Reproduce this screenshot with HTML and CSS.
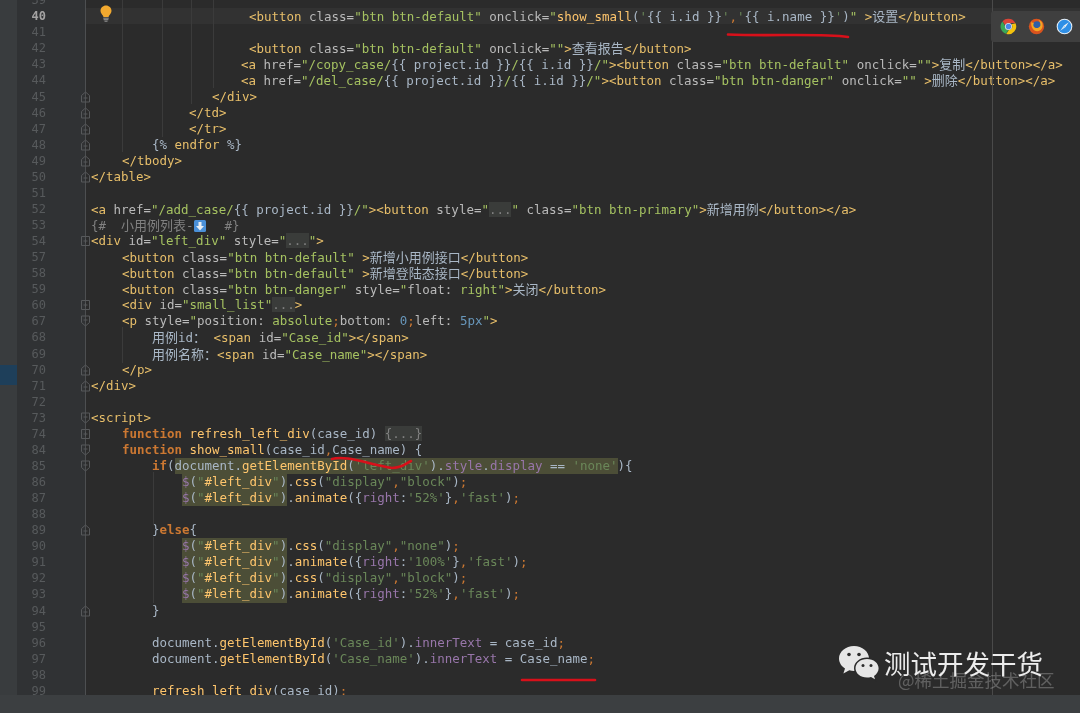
FILE: index.html
```html
<!DOCTYPE html>
<html lang="zh">
<head>
<meta charset="utf-8">
<title>Code editor</title>
<link rel="stylesheet" href="styles.css">
</head>
<body>
<svg class="defs" aria-hidden="true">
  <symbol id="fe" viewBox="0 0 9 12"><path d="M.5 11V4.5L4.5 1 8.5 4.5V11Z" fill="none" stroke="#57595b"/><path d="M2.5 7H6.5" stroke="#57595b"/></symbol>
  <symbol id="fs" viewBox="0 0 9 12"><path d="M.5 1V7.5L4.5 11 8.5 7.5V1Z" fill="none" stroke="#57595b"/><path d="M2.5 5H6.5" stroke="#57595b"/></symbol>
  <symbol id="fp" viewBox="0 0 9 12"><path d="M.5 1.5H8.5V10.5H.5Z" fill="none" stroke="#57595b"/><path d="M2.5 6H6.5M4.5 4V8" stroke="#57595b"/></symbol>
</svg>
<div class="window">
  <div class="editor">
    <div class="strip"><div class="strip-sel"></div></div>
    <div class="pane">
      <div class="lines">
        <div class="row"><div class="gut"><span class="num">39</span></div><div class="code"></div></div>
        <div class="row cur"><div class="gut"><span class="num">40</span></div><div class="code in7"><span class="t">&lt;button</span> <span class="n">class=</span><span class="s">"btn btn-default"</span> <span class="n">onclick=</span><span class="s">"</span><span class="f">show_small</span>(<span class="j">'</span>{{ i.id }}<span class="j">'</span><span class="k">,</span><span class="j">'</span>{{ i.name }}<span class="j">'</span>)<span class="s">"</span> <span class="t">&gt;</span><span class="cn">设置</span><span class="t">&lt;/button&gt;</span></div></div>
        <div class="row"><div class="gut"><span class="num">41</span></div><div class="code"></div></div>
        <div class="row"><div class="gut"><span class="num">42</span></div><div class="code in7"><span class="t">&lt;button</span> <span class="n">class=</span><span class="s">"btn btn-default"</span> <span class="n">onclick=</span><span class="s">""</span><span class="t">&gt;</span><span class="cn">查看报告</span><span class="t">&lt;/button&gt;</span></div></div>
        <div class="row"><div class="gut"><span class="num">43</span></div><div class="code in6"><span class="t">&lt;a</span> <span class="n">href=</span><span class="s">"/copy_case/</span>{{ project.id }}<span class="s">/</span>{{ i.id }}<span class="s">/"</span><span class="t">&gt;&lt;button</span> <span class="n">class=</span><span class="s">"btn btn-default"</span> <span class="n">onclick=</span><span class="s">""</span><span class="t">&gt;</span><span class="cn">复制</span><span class="t">&lt;/button&gt;&lt;/a&gt;</span></div></div>
        <div class="row"><div class="gut"><span class="num">44</span></div><div class="code in6"><span class="t">&lt;a</span> <span class="n">href=</span><span class="s">"/del_case/</span>{{ project.id }}<span class="s">/</span>{{ i.id }}<span class="s">/"</span><span class="t">&gt;&lt;button</span> <span class="n">class=</span><span class="s">"btn btn-danger"</span> <span class="n">onclick=</span><span class="s">""</span> <span class="t">&gt;</span><span class="cn">删除</span><span class="t">&lt;/button&gt;&lt;/a&gt;</span></div></div>
        <div class="row"><div class="gut"><span class="num">45</span><svg class="fold"><use href="#fe"/></svg></div><div class="code in5"><span class="t">&lt;/div&gt;</span></div></div>
        <div class="row"><div class="gut"><span class="num">46</span><svg class="fold"><use href="#fe"/></svg></div><div class="code in4"><span class="t">&lt;/td&gt;</span></div></div>
        <div class="row"><div class="gut"><span class="num">47</span><svg class="fold"><use href="#fe"/></svg></div><div class="code in4"><span class="t">&lt;/tr&gt;</span></div></div>
        <div class="row"><div class="gut"><span class="num">48</span><svg class="fold"><use href="#fe"/></svg></div><div class="code in2">{% <span class="t">endfor</span> %}</div></div>
        <div class="row"><div class="gut"><span class="num">49</span><svg class="fold"><use href="#fe"/></svg></div><div class="code in1"><span class="t">&lt;/tbody&gt;</span></div></div>
        <div class="row"><div class="gut"><span class="num">50</span><svg class="fold"><use href="#fe"/></svg></div><div class="code"><span class="t">&lt;/table&gt;</span></div></div>
        <div class="row"><div class="gut"><span class="num">51</span></div><div class="code"></div></div>
        <div class="row"><div class="gut"><span class="num">52</span></div><div class="code"><span class="t">&lt;a</span> <span class="n">href=</span><span class="s">"/add_case/</span>{{ project.id }}<span class="s">/"</span><span class="t">&gt;&lt;button</span> <span class="n">style=</span><span class="s">"</span><span class="fd">...</span><span class="s">"</span> <span class="n">class=</span><span class="s">"btn btn-primary"</span><span class="t">&gt;</span><span class="cn">新增用例</span><span class="t">&lt;/button&gt;&lt;/a&gt;</span></div></div>
        <div class="row"><div class="gut"><span class="num">53</span></div><div class="code c">{#  <span class="cn">小用例列表</span>-<svg class="arrow" viewBox="0 0 12 12"><rect width="12" height="12" rx="1.5" fill="#4a90d9"/><path d="M4.5 2H7.5V6H10L6 10.5 2 6H4.5Z" fill="#e8eef4"/></svg>  #}</div></div>
        <div class="row"><div class="gut"><span class="num">54</span><svg class="fold"><use href="#fp"/></svg></div><div class="code"><span class="t">&lt;div</span> <span class="n">id=</span><span class="s">"left_div"</span> <span class="n">style=</span><span class="s">"</span><span class="fd">...</span><span class="s">"</span><span class="t">&gt;</span></div></div>
        <div class="row"><div class="gut"><span class="num">57</span></div><div class="code in1"><span class="t">&lt;button</span> <span class="n">class=</span><span class="s">"btn btn-default"</span> <span class="t">&gt;</span><span class="cn">新增小用例接口</span><span class="t">&lt;/button&gt;</span></div></div>
        <div class="row"><div class="gut"><span class="num">58</span></div><div class="code in1"><span class="t">&lt;button</span> <span class="n">class=</span><span class="s">"btn btn-default"</span> <span class="t">&gt;</span><span class="cn">新增登陆态接口</span><span class="t">&lt;/button&gt;</span></div></div>
        <div class="row"><div class="gut"><span class="num">59</span></div><div class="code in1"><span class="t">&lt;button</span> <span class="n">class=</span><span class="s">"btn btn-danger"</span> <span class="n">style=</span><span class="s">"</span><span class="n">float: </span><span class="s">right"</span><span class="t">&gt;</span><span class="cn">关闭</span><span class="t">&lt;/button&gt;</span></div></div>
        <div class="row"><div class="gut"><span class="num">60</span><svg class="fold"><use href="#fp"/></svg></div><div class="code in1"><span class="t">&lt;div</span> <span class="n">id=</span><span class="s">"small_list"</span><span class="fd">...</span><span class="t">&gt;</span></div></div>
        <div class="row"><div class="gut"><span class="num">67</span><svg class="fold"><use href="#fs"/></svg></div><div class="code in1"><span class="t">&lt;p</span> <span class="n">style=</span><span class="s">"</span><span class="n">position: </span><span class="s">absolute</span><span class="k">;</span><span class="n">bottom: </span><span class="b">0</span><span class="k">;</span><span class="n">left: </span><span class="b">5px</span><span class="s">"</span><span class="t">&gt;</span></div></div>
        <div class="row"><div class="gut"><span class="num">68</span></div><div class="code in2"><span class="cn">用例</span>id<span class="cn">：</span> <span class="t">&lt;span</span> <span class="n">id=</span><span class="s">"Case_id"</span><span class="t">&gt;&lt;/span&gt;</span></div></div>
        <div class="row"><div class="gut"><span class="num">69</span></div><div class="code in2"><span class="cn">用例名称：</span><span class="t">&lt;span</span> <span class="n">id=</span><span class="s">"Case_name"</span><span class="t">&gt;&lt;/span&gt;</span></div></div>
        <div class="row"><div class="gut"><span class="num">70</span><svg class="fold"><use href="#fe"/></svg></div><div class="code in1"><span class="t">&lt;/p&gt;</span></div></div>
        <div class="row"><div class="gut"><span class="num">71</span><svg class="fold"><use href="#fe"/></svg></div><div class="code"><span class="t">&lt;/div&gt;</span></div></div>
        <div class="row"><div class="gut"><span class="num">72</span></div><div class="code"></div></div>
        <div class="row"><div class="gut"><span class="num">73</span><svg class="fold"><use href="#fs"/></svg></div><div class="code"><span class="t">&lt;script&gt;</span></div></div>
        <div class="row"><div class="gut"><span class="num">74</span><svg class="fold"><use href="#fp"/></svg></div><div class="code in1"><span class="kw">function</span> <span class="f">refresh_left_div</span>(case_id) <span class="fd">{...}</span></div></div>
        <div class="row"><div class="gut"><span class="num">84</span><svg class="fold"><use href="#fs"/></svg></div><div class="code in1"><span class="kw">function</span> <span class="f">show_small</span>(case_id<span class="k">,</span>Case_name) {</div></div>
        <div class="row"><div class="gut"><span class="num">85</span><svg class="fold"><use href="#fs"/></svg></div><div class="code in2"><span class="kw">if</span>(<span class="h">document.<span class="f">getElementById</span>(<span class="j">'left_div'</span>).<span class="m">style</span>.<span class="m">display</span> == <span class="j">'none'</span></span>){</div></div>
        <div class="row"><div class="gut"><span class="num">86</span></div><div class="code in3"><span class="h"><span class="m">$</span>(<span class="j">"</span><span class="f">#left_div</span><span class="j">"</span>)</span>.<span class="f">css</span>(<span class="j">"display"</span><span class="k">,</span><span class="j">"block"</span>)<span class="k">;</span></div></div>
        <div class="row"><div class="gut"><span class="num">87</span></div><div class="code in3"><span class="h"><span class="m">$</span>(<span class="j">"</span><span class="f">#left_div</span><span class="j">"</span>)</span>.<span class="f">animate</span>({<span class="m">right</span>:<span class="j">'52%'</span>}<span class="k">,</span><span class="j">'fast'</span>)<span class="k">;</span></div></div>
        <div class="row"><div class="gut"><span class="num">88</span></div><div class="code"></div></div>
        <div class="row"><div class="gut"><span class="num">89</span><svg class="fold"><use href="#fe"/></svg></div><div class="code in2">}<span class="kw">else</span>{</div></div>
        <div class="row"><div class="gut"><span class="num">90</span></div><div class="code in3"><span class="h"><span class="m">$</span>(<span class="j">"</span><span class="f">#left_div</span><span class="j">"</span>)</span>.<span class="f">css</span>(<span class="j">"display"</span><span class="k">,</span><span class="j">"none"</span>)<span class="k">;</span></div></div>
        <div class="row"><div class="gut"><span class="num">91</span></div><div class="code in3"><span class="h"><span class="m">$</span>(<span class="j">"</span><span class="f">#left_div</span><span class="j">"</span>)</span>.<span class="f">animate</span>({<span class="m">right</span>:<span class="j">'100%'</span>}<span class="k">,</span><span class="j">'fast'</span>)<span class="k">;</span></div></div>
        <div class="row"><div class="gut"><span class="num">92</span></div><div class="code in3"><span class="h"><span class="m">$</span>(<span class="j">"</span><span class="f">#left_div</span><span class="j">"</span>)</span>.<span class="f">css</span>(<span class="j">"display"</span><span class="k">,</span><span class="j">"block"</span>)<span class="k">;</span></div></div>
        <div class="row"><div class="gut"><span class="num">93</span></div><div class="code in3"><span class="h"><span class="m">$</span>(<span class="j">"</span><span class="f">#left_div</span><span class="j">"</span>)</span>.<span class="f">animate</span>({<span class="m">right</span>:<span class="j">'52%'</span>}<span class="k">,</span><span class="j">'fast'</span>)<span class="k">;</span></div></div>
        <div class="row"><div class="gut"><span class="num">94</span><svg class="fold"><use href="#fe"/></svg></div><div class="code in2">}</div></div>
        <div class="row"><div class="gut"><span class="num">95</span></div><div class="code"></div></div>
        <div class="row"><div class="gut"><span class="num">96</span></div><div class="code in2">document.<span class="f">getElementById</span>(<span class="j">'Case_id'</span>).<span class="m">innerText</span> = case_id<span class="k">;</span></div></div>
        <div class="row"><div class="gut"><span class="num">97</span></div><div class="code in2">document.<span class="f">getElementById</span>(<span class="j">'Case_name'</span>).<span class="m">innerText</span> = Case_name<span class="k">;</span></div></div>
        <div class="row"><div class="gut"><span class="num">98</span></div><div class="code"></div></div>
        <div class="row"><div class="gut"><span class="num">99</span></div><div class="code in2"><span class="f">refresh_left_div</span>(case_id)<span class="k">;</span></div></div>
      </div>
    </div>
  </div>
  <div class="status"></div>

  <div class="guide g1"></div>
  <div class="guide g2"></div>
  <div class="guide g3"></div>
  <div class="guide g4"></div>
  <div class="guide g5"></div>
  <div class="guide g6"></div>
  <div class="guide g7"></div>
  <div class="margin-line"></div>

  <svg class="bulb" viewBox="0 0 12 17"><path d="M6 0.5C9 .5 11.5 2.8 11.5 5.7 11.5 8 10 9.2 9 10.8 8.7 11.3 8.6 11.7 8.6 12H3.4C3.4 11.7 3.3 11.3 3 10.8 2 9.2 .5 8 .5 5.7 .5 2.8 3 .5 6 .5Z" fill="#f2a92f"/><path d="M3.3 13.2H8.7M3.6 14.7H8.4M4.5 16.2H7.5" stroke="#9a9a9a" stroke-width="1"/></svg>

  <div class="dock">
    <svg class="dock-icon" viewBox="0 0 20 20"><path d="M10 1A9 9 0 0 1 18 6H10A4.2 4.2 0 0 0 6 8.5L3 3.8A9 9 0 0 1 10 1Z" fill="#db4437"/><path d="M2.9 4A9 9 0 0 0 7 18.6L10 14.2A4.2 4.2 0 0 1 6 9.5Z" fill="#3aa757"/><path d="M18.2 6.3A9 9 0 0 1 7.4 18.7L10.4 14.2A4.2 4.2 0 0 0 13.5 7.3Z" fill="#f4c20d"/><circle cx="10" cy="10" r="4.2" fill="#e4e4e4"/><circle cx="10" cy="10" r="3.2" fill="#4a86e8"/></svg>
    <svg class="dock-icon" viewBox="0 0 20 20"><circle cx="10" cy="10" r="9" fill="#d9531e"/><circle cx="10.5" cy="9" r="5.2" fill="#2f5fa8"/><path d="M4 4C3 9 5 15 11 15.5 15 15.5 18 12 17 6.5 16 4 14 2.5 12 2.2 14 4 15 6.5 14.5 9 13 12.5 8 13 6.5 9.5 6 8 6.5 6.5 7 5.5 5.5 6 4.8 5.5 4 4Z" fill="#f5a623"/></svg>
    <svg class="dock-icon" viewBox="0 0 20 20"><circle cx="10" cy="10" r="9.2" fill="#e6eef5"/><circle cx="10" cy="10" r="8" fill="#2f8fe6"/><path d="M15 5L11 11 9 9Z" fill="#f2f2f2"/><path d="M5 15L9 9 11 11Z" fill="#cfe4f6"/></svg>
  </div>

  <svg class="marks" viewBox="0 0 1080 713">
    <path d="M728 34.5C770 36.5 820 33 848 37" />
    <path d="M332 459C345 455 365 463 392 468 402 468 405 464 411 461" />
    <path d="M522 680H595" />
  </svg>

  <div class="stamp">
    <svg class="wechat" viewBox="0 0 44 38"><path d="M17 1C8.7 1 2 6.6 2 13.5 2 17.6 4.4 21.2 8 23.4L6.4 28.5 12.3 25.2C13.8 25.7 15.4 26 17 26 25.3 26 32 20.4 32 13.5 32 6.6 25.3 1 17 1Z" fill="#e6e6e6"/><path d="M30 12.5C22.8 12.5 17 17.3 17 23.3 17 29.3 22.8 34 30 34 31.4 34 32.7 33.8 34 33.4L39.2 36.4 37.8 31.8C41 29.8 43 26.8 43 23.3 43 17.3 37.2 12.5 30 12.5Z" fill="#2b2b2b"/><path d="M30 14C23.4 14 18.5 18.2 18.5 23.3 18.5 28.4 23.4 32.5 30 32.5 31.4 32.5 32.7 32.3 34 31.9L38 34.2 37 30.9C39.8 29.2 41.6 26.5 41.6 23.3 41.6 18.2 36.6 14 30 14Z" fill="#e6e6e6"/><circle cx="12" cy="9.5" r="1.8" fill="#2b2b2b"/><circle cx="22" cy="9.5" r="1.8" fill="#2b2b2b"/><circle cx="26" cy="20.5" r="1.5" fill="#2b2b2b"/><circle cx="34" cy="20.5" r="1.5" fill="#2b2b2b"/></svg>
    <div class="stamp-text">
      <span class="stamp-title">测试开发干货</span>
      <span class="stamp-sub">@稀土掘金技术社区</span>
    </div>
  </div>
</div>
</body>
</html>
```
FILE: styles.css
```css
* { box-sizing: border-box; }
html, body { margin: 0; padding: 0; background: #2b2b2b; }
.defs { display: none; }

.window {
  position: relative;
  width: 1080px;
  height: 713px;
  display: flex;
  flex-direction: column;
  overflow: hidden;
  background: #2b2b2b;
  filter: blur(0.5px);
}

.editor { flex: 1; min-height: 0; display: flex; overflow: hidden; }

.strip {
  width: 17px;
  flex: none;
  background: #393c3e;
  padding-top: 365px;
}
.strip-sel { height: 20px; background: #1e3f5a; }

.pane { flex: 1; min-width: 0; }
.lines { margin-top: -7.85px; }

.row {
  display: flex;
  height: 16.07px;
  font: 12.48px/16.07px "DejaVu Sans Mono", "Noto Sans CJK SC", monospace;
  color: #a9b7c6;
  white-space: pre;
}
.row.cur { background: #323232; }

.gut {
  width: 74px;
  flex: none;
  display: flex;
  align-items: center;
  background: linear-gradient(to right, #303234 68px, #4d4f51 68px, #4d4f51 69px, transparent 69px);
}
.cur .gut { background: linear-gradient(to right, #303234 68px, #4d4f51 68px, #4d4f51 69px, #323232 69px); }

.num {
  width: 29px;
  text-align: right;
  font-size: 12px;
  color: #575a5c;
}
.cur .num { color: #a4a3a3; font-weight: 700; }

.fold { width: 9px; height: 12px; margin-left: 35px; flex: none; overflow: visible; }

.code { flex: 1; min-width: 0; }
.in1 { padding-left: 31px; }
.in2 { padding-left: 61px; }
.in3 { padding-left: 91px; }
.in4 { padding-left: 98px; }
.in5 { padding-left: 121px; }
.in6 { padding-left: 150px; }
.in7 { padding-left: 158px; }

.t { color: #e8bf6a; }
.n { color: #bababa; }
.s { color: #a5c261; }
.k { color: #cc7832; }
.kw { color: #cc7832; font-weight: 700; }
.f { color: #ffc66d; }
.m { color: #9876aa; }
.j { color: #6a8759; }
.b { color: #6897bb; }
.c { color: #808080; }
.h { background: #4c4e37; display: inline-block; height: 16.07px; }
.fd { background: #3a3c3a; color: #808080; }
.cn { font-family: "Noto Sans CJK SC", sans-serif; font-size: 13px; }
.arrow { width: 12px; height: 12px; vertical-align: -2px; margin-right: 4px; }

.status { height: 18px; flex: none; background: #3c3f41; }

.guide { position: absolute; width: 1px; background: #3b3b3b; }
.g1 { left: 122px; top: 0; height: 152px; }
.g2 { left: 162px; top: 0; height: 137px; }
.g3 { left: 191px; top: 0; height: 104px; }
.g4 { left: 213px; top: 0; height: 88px; }
.g5 { left: 122px; top: 327px; height: 36px; }
.g6 { left: 153px; top: 472px; height: 53px; }
.g7 { left: 153px; top: 537px; height: 66px; }

.margin-line { position: absolute; left: 992px; top: 0; height: 695px; width: 1px; background: #4a4a4a; }

.bulb { position: absolute; left: 100px; top: 5px; width: 12px; height: 17px; }

.dock {
  position: absolute;
  left: 991px;
  top: 11px;
  width: 100px;
  height: 31px;
  padding-left: 9px;
  display: flex;
  align-items: center;
  gap: 11px;
  background: #3f3f3f;
  border-radius: 3px 0 0 3px;
}
.dock-icon { width: 17px; height: 17px; flex: none; }

.marks { position: absolute; left: 0; top: 0; width: 1080px; height: 713px; fill: none; stroke: #d8101a; stroke-width: 2.6; stroke-linecap: round; }

.stamp { position: absolute; left: 837px; top: 645px; display: flex; gap: 3px; }
.wechat { width: 44px; height: 38px; flex: none; }
.stamp-text { display: flex; flex-direction: column; }
.stamp-title {
  margin-top: 3px;
  font: 26.5px/30px "Noto Sans CJK SC", sans-serif;
  color: #ececec;
  white-space: nowrap;
}
.stamp-sub {
  margin: -8px 0 0 14px;
  font: 17.5px/20px "Noto Sans CJK SC", sans-serif;
  color: rgba(255, 255, 255, 0.25);
  white-space: nowrap;
}
```
